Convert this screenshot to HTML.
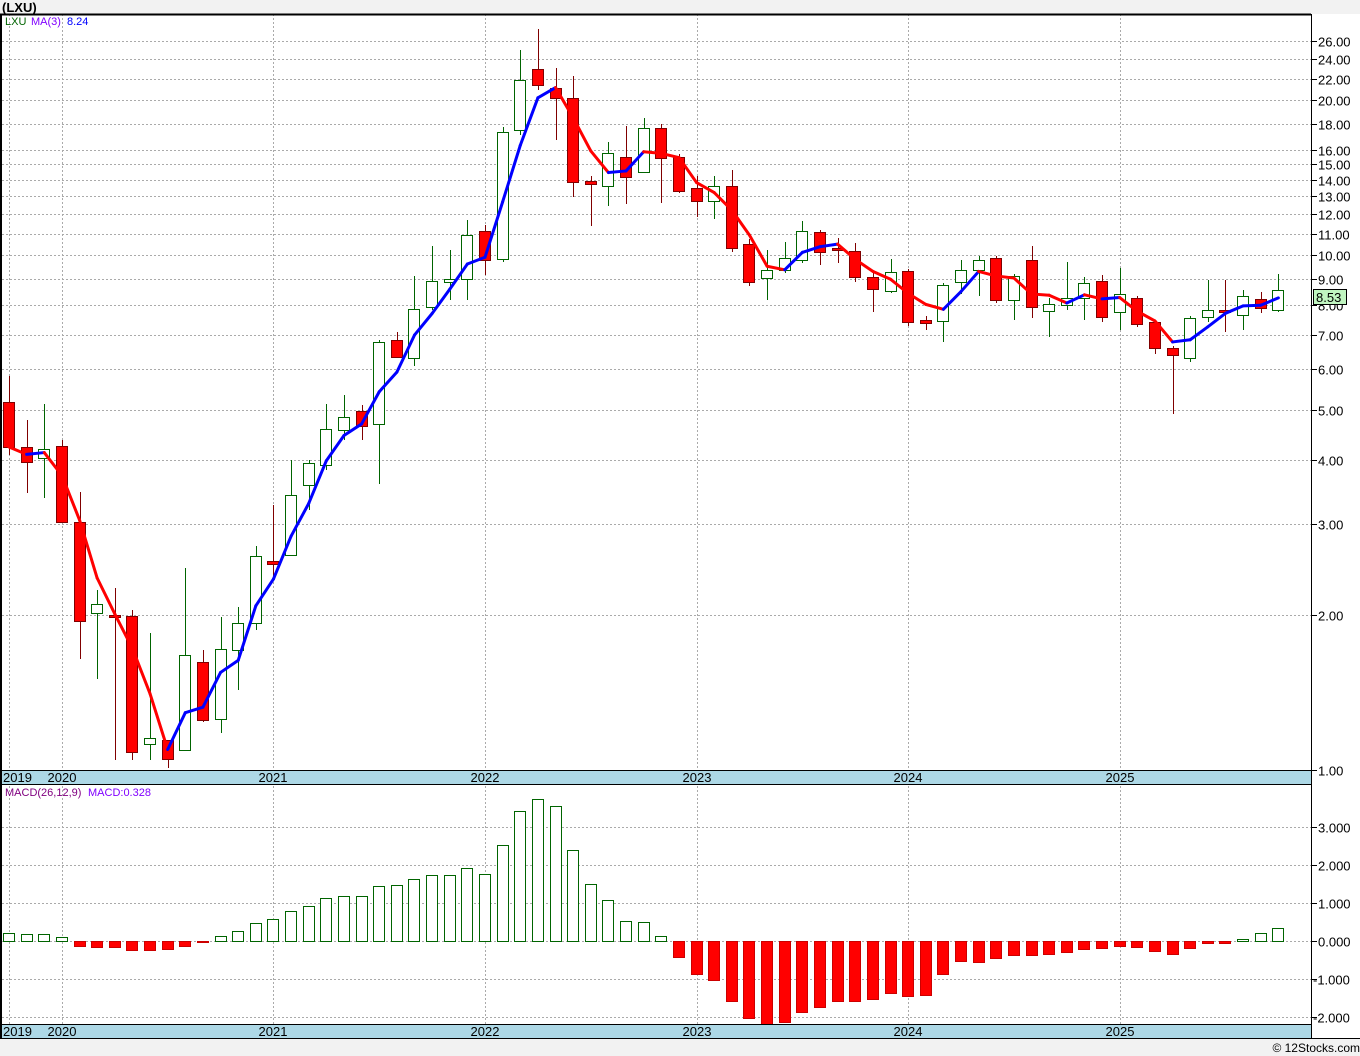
<!DOCTYPE html>
<html><head><meta charset="utf-8"><style>
html,body{margin:0;padding:0;background:#f2f2f2;}
svg{display:block;font-family:"Liberation Sans",sans-serif;}
</style></head><body>
<svg id="s" width="1360" height="1056" xmlns="http://www.w3.org/2000/svg">
<rect x="0" y="0" width="1360" height="1056" fill="#f2f2f2"/>
<rect x="0" y="14" width="1360" height="1024" fill="#fff"/>
<text x="2" y="12" font-size="13" font-weight="bold">(LXU)</text>
<g id="g"></g>
<text x="1360" y="1052" font-size="12" text-anchor="end">© 12Stocks.com</text>
</svg>
<script>
var g=document.getElementById('g'),h='';
function X(i){return 9+17.63*i;}
var lv=[26,24,22,20,18,16,15,14,13,12,11,10,9,8,7,6,5,4,3,2,1];
function Y(p){return 770-515*Math.log10(p);}
lv.forEach(function(p){var y=Math.round(Y(p))+.5;if(p>1)h+='<line x1="2" x2="1311" y1="'+y+'" y2="'+y+'" stroke="#aaa" stroke-dasharray="2,2"/>';
h+='<line x1="1311" x2="1317" y1="'+y+'" y2="'+y+'" stroke="#000"/><text x="1318" y="'+(y+5)+'" font-size="13">'+p.toFixed(2)+'</text>';});
[3,2,1,0,-1,-2].forEach(function(v){var y=Math.round(941-38*v)+.5;h+='<line x1="2" x2="1311" y1="'+y+'" y2="'+y+'" stroke="#aaa" stroke-dasharray="2,2"/><line x1="1311" x2="1317" y1="'+y+'" y2="'+y+'" stroke="#000"/><text x="'+(v<0?1313:1318)+'" y="'+(y+5)+'" font-size="13">'+(v<0?'-':'')+Math.abs(v).toFixed(3)+'</text>';});
var yrs=[[9,'2019'],[62,'2020'],[273,'2021'],[485,'2022'],[697,'2023'],[908,'2024'],[1120,'2025']];
yrs.forEach(function(a){h+='<line x1="'+(a[0]+.5)+'" x2="'+(a[0]+.5)+'" y1="14" y2="1024" stroke="#aaa" stroke-dasharray="2,2"/>';});
var c=[[402,447,376,455,1],[447,462,420,493,1],[449,458,404,498,0],[446,522,440,522,1],[522,621,492,659,1],[604,613,590,679,0],[615,617,588,760,1],[616,752,610,760,1],[738,744,633,760,0],[740,759,740,768,1],[655,750,568,750,0],[662,720,650,722,1],[649,719,617,733,0],[623,650,607,690,0],[556,623,546,630,0],[561,564,505,578,1],[495,555,460,555,0],[463,485,460,510,0],[429,465,404,470,0],[417,430,395,440,0],[411,426,405,440,1],[342,424,340,484,0],[340,357,332,358,1],[309,358,276,366,0],[281,307,246,310,0],[279,282,250,300,0],[235,279,220,300,0],[231,260,225,275,1],[132,259,127,262,0],[80,130,50,135,0],[69,85,29,90,1],[88,98,68,140,1],[98,182,76,197,1],[181,184,176,226,1],[153,186,142,206,0],[157,177,126,204,1],[128,172,118,173,0],[128,158,124,203,1],[157,191,154,193,1],[188,201,176,217,1],[186,201,176,219,0],[186,248,170,252,1],[244,282,239,286,1],[270,278,250,300,0],[258,270,242,273,0],[231,260,221,263,0],[232,252,230,265,1],[248,250,238,263,1],[251,277,243,282,1],[277,289,273,312,1],[272,291,259,293,0],[271,322,269,326,1],[320,323,316,330,1],[285,321,283,342,0],[270,282,260,294,0],[260,270,256,296,0],[258,300,256,303,1],[276,300,274,320,0],[260,307,246,318,1],[304,311,298,337,0],[298,305,262,310,0],[283,298,277,320,0],[281,317,275,322,1],[294,312,268,330,0],[298,324,296,327,1],[322,348,320,354,1],[348,355,346,414,1],[318,358,316,362,0],[310,317,280,322,0],[310,312,280,332,1],[296,315,290,330,0],[299,308,292,313,1],[290,310,274,312,0]];
var cl=[];
c.forEach(function(d,i){var x=Math.round(X(i));var r=d[4];var wc=r?'#800000':'#006400';
h+='<line x1="'+(x+.5)+'" x2="'+(x+.5)+'" y1="'+d[2]+'" y2="'+d[3]+'" stroke="'+wc+'"/>';
h+='<rect x="'+(x-5.5)+'" y="'+(d[0]+.5)+'" width="11" height="'+Math.max(2,d[1]-d[0])+'" fill="'+(r?'#f00':'#fff')+'" stroke="'+wc+'"/>';
cl.push(r?d[1]:d[0]);});
var ma=[];for(var i=0;i<cl.length;i++){var s=0,n=0;for(var k=Math.max(0,i-2);k<=i;k++){s+=Math.pow(10,(770-cl[k])/515);n++;}ma.push(Y(s/n));}
for(var i=1;i<ma.length;i++){h+='<line x1="'+X(i-1)+'" y1="'+ma[i-1]+'" x2="'+X(i)+'" y2="'+ma[i]+'" stroke="'+(ma[i]<=ma[i-1]?'#0000ff':'#ff0000')+'" stroke-width="3" stroke-linecap="round"/>';}
var m=[933,934,934,937,946,947,947,950,950,949,946,942,936,931,923,919,911,906,898,896,896,886,885,879,875,875,868,874,845,811,799,806,850,884,900,921,922,936,957,974,980,1001,1018,1024,1022,1012,1007,1001,1001,999,993,996,995,974,961,962,958,955,955,954,952,949,948,946,947,951,954,948,943,943,939,933,928];
m.forEach(function(v,i){var x=Math.round(X(i));var neg=v>941;var y0=neg?941:v,y1=neg?v:941;
h+='<rect x="'+(x-5.5)+'" y="'+(y0+.5)+'" width="11" height="'+Math.max(1,y1-y0)+'" fill="'+(neg?'#f00':'#fff')+'" stroke="'+(neg?'#c00':'#006400')+'"/>';});
[[770,784],[1024,1038]].forEach(function(b){h+='<rect x="0" y="'+b[0]+'" width="1311" height="'+(b[1]-b[0])+'" fill="#add8e6"/><line x1="0" x2="1311" y1="'+(b[0]+.5)+'" y2="'+(b[0]+.5)+'" stroke="#000"/><line x1="0" x2="1311" y1="'+(b[1]+.5)+'" y2="'+(b[1]+.5)+'" stroke="#000"/>';
yrs.forEach(function(a,j){h+='<text x="'+(j==0?3:a[0])+'" y="'+(b[0]+12)+'" font-size="13"'+(j==0?'':' text-anchor="middle"')+'>'+a[1]+'</text>';});});
h+='<line x1="0" x2="1311" y1="14.5" y2="14.5" stroke="#000" stroke-width="2"/><line x1="1" x2="1" y1="14" y2="1038" stroke="#000" stroke-width="2"/><line x1="1311.5" x2="1311.5" y1="14" y2="1038" stroke="#000"/><line x1="0" x2="1360" y1="1038.5" y2="1038.5" stroke="#000"/>';
h+='<text x="5" y="25" font-size="11" fill="#006400">LXU</text><text x="31" y="25" font-size="11" fill="#8000ff">MA(3)</text><text x="67" y="25" font-size="11" fill="#0000ff">8.24</text>';
h+='<text x="5" y="796" font-size="11" fill="#800080">MACD(26,12,9)</text><text x="88" y="796" font-size="11" fill="#8000ff">MACD:0.328</text>';
h+='<rect x="1313.5" y="289.5" width="33" height="15" fill="#c0f5c0" stroke="#000"/><text x="1316" y="302" font-size="13">8.53</text>';
g.innerHTML=h;
</script>
</body></html>
